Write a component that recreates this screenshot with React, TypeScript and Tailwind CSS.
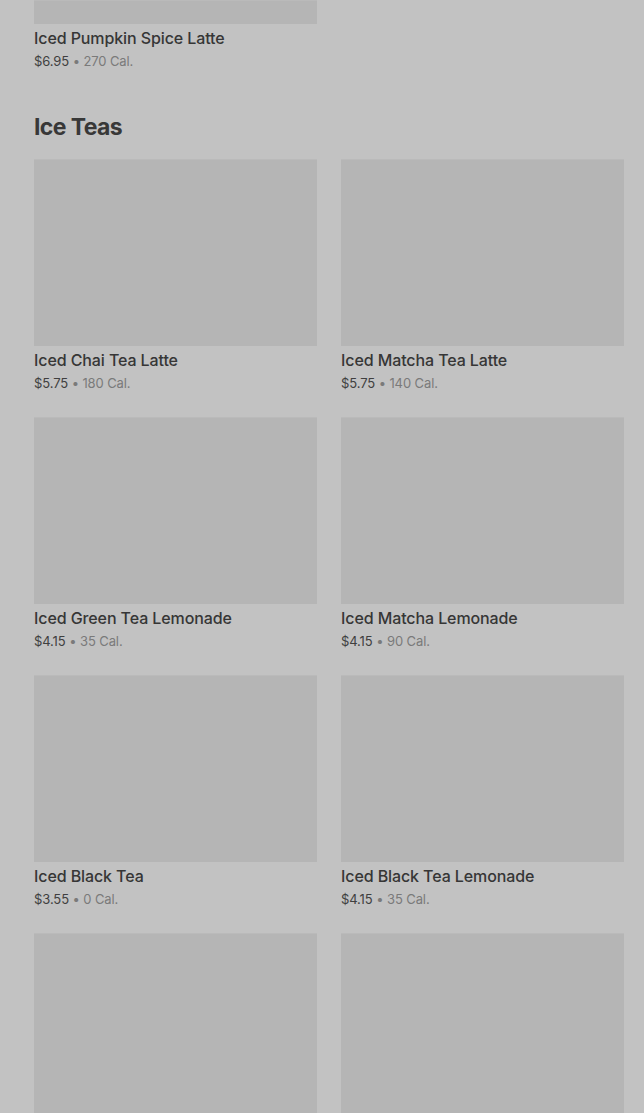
import React from "react";

type Item = { name: string; price: string; cal: string };

const teas: Item[] = [
  { name: "Iced Chai Tea Latte", price: "$5.75", cal: "180 Cal." },
  { name: "Iced Matcha Tea Latte", price: "$5.75", cal: "140 Cal." },
  { name: "Iced Green Tea Lemonade", price: "$4.15", cal: "35 Cal." },
  { name: "Iced Matcha Lemonade", price: "$4.15", cal: "90 Cal." },
  { name: "Iced Black Tea", price: "$3.55", cal: "0 Cal." },
  { name: "Iced Black Tea Lemonade", price: "$4.15", cal: "35 Cal." },
];

function Card({ item, imgH = "h-[187px]" }: { item?: Item; imgH?: string }) {
  return (
    <div className="flex flex-col">
      <div className={`${imgH} w-full bg-[#b5b5b5] border-t border-[#bababa]`} />
      {item && (
        <>
          <div className="mt-[2px] text-[16px] leading-[24px] font-medium text-[#363636] tracking-[-0.1px]">{item.name}</div>
          <div className="text-[13px] leading-[22px] text-[#3f3f3f] tracking-[-0.1px]">
            {item.price}
            <span className="text-[#7a7a7a]"> • {item.cal}</span>
          </div>
        </>
      )}
    </div>
  );
}

export default function App() {
  return (
    <div
      className="h-[1113px] overflow-hidden bg-[#c2c2c2] pl-[34px] pr-[20px]"
      style={{ fontFamily: "Inter, 'Noto Sans', sans-serif" }}
    >
      <div className="grid grid-cols-2 gap-x-[24px]">
        <Card item={{ name: "Iced Pumpkin Spice Latte", price: "$6.95", cal: "270 Cal." }} imgH="h-[24px]" />
      </div>
      <h2 className="mt-[39px] text-[23px] leading-[32px] font-bold text-[#383838] tracking-[-0.6px]">Ice Teas</h2>
      <div className="mt-[16px] grid grid-cols-2 gap-x-[24px] gap-y-[23px]">
        {teas.map((t) => (
          <Card key={t.name} item={t} />
        ))}
        <Card />
        <Card />
      </div>
    </div>
  );
}
